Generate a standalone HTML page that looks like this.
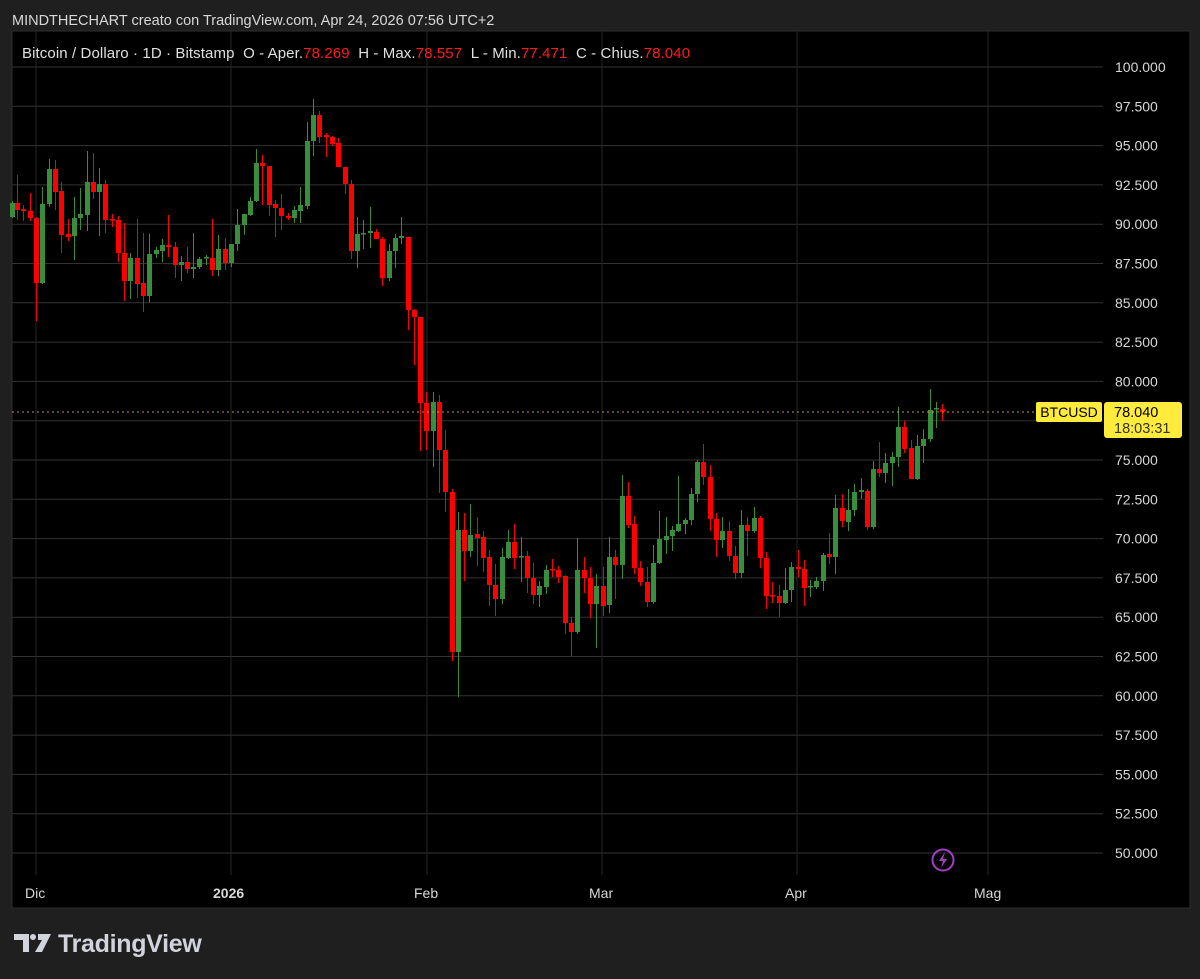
<!DOCTYPE html>
<html><head><meta charset="utf-8"><style>
body{margin:0;background:#1f1f1f;width:1200px;height:979px;overflow:hidden;font-family:"Liberation Sans",sans-serif;}
#hdr{position:absolute;left:12px;top:13px;color:#d8d8d8;font-size:14.5px;}
#leg{position:absolute;left:22px;top:45px;color:#e0e0e0;font-size:15px;white-space:pre;letter-spacing:0.1px}
#leg span{color:#ff1a1a}
svg{position:absolute;left:0;top:0;}
</style></head><body>
<svg id="s" width="1200" height="979" xmlns="http://www.w3.org/2000/svg" font-family="Liberation Sans, sans-serif">
<rect x="12" y="31" width="1178" height="877" fill="#000" stroke="#2e2e2e"/>
<g id="grid"></g>
<g id="candles"></g>
<line x1="12" y1="412" x2="1035" y2="412" stroke="#c0a030" stroke-width="1" stroke-dasharray="2,3"/>
<rect x="1036" y="402" width="66" height="20" rx="2" fill="#ffeb3b"/>
<text x="1069" y="417" font-size="14" fill="#000" text-anchor="middle">BTCUSD</text>
<rect x="1104" y="402" width="78" height="36" rx="3" fill="#ffeb3b"/>
<text x="1114" y="417" font-size="14.5" fill="#000">78.040</text>
<text x="1114" y="433" font-size="14.5" fill="#333">18:03:31</text>
<circle cx="943" cy="860" r="10.5" fill="none" stroke="#a43fc4" stroke-width="2"/>
<path d="M945 852 L939 861 L943 861 L941 868 L947 859 L943 859 Z" fill="#a43fc4"/>
<g font-size="14" fill="#d8d8d8">
<text x="25" y="898">Dic</text>
<text x="213" y="898" font-weight="bold">2026</text>
<text x="414" y="898">Feb</text>
<text x="589" y="898">Mar</text>
<text x="785" y="898">Apr</text>
<text x="974" y="898">Mag</text>
</g>
<g fill="#d1d4dc">
<path d="M14 934 h15 v18 h-6 v-12 h-9 z"/>
<circle cx="33" cy="937" r="3"/>
<path d="M38 934 h13 l-9 18 h-7 l7 -12 h-4 z"/>
<text x="58" y="952" font-size="25" font-weight="bold" letter-spacing="-0.3">TradingView</text>
</g>
</svg>
<div id="hdr">MINDTHECHART creato con TradingView.com, Apr 24, 2026 07:56 UTC+2</div>
<div id="leg">Bitcoin / Dollaro · 1D · Bitstamp  O - Aper.<span>78.269</span>  H - Max.<span>78.557</span>  L - Min.<span>77.471</span>  C - Chius.<span>78.040</span></div>
<script>
var ns="http://www.w3.org/2000/svg";
function el(p,t,a){var e=document.createElementNS(ns,t);for(var k in a)e.setAttribute(k,a[k]);p.appendChild(e);return e;}
var g=document.getElementById('grid');
var vals=["100.000","97.500","95.000","92.500","90.000","87.500","85.000","82.500","80.000","77.500","75.000","72.500","70.000","67.500","65.000","62.500","60.000","57.500","55.000","52.500","50.000"];
for(var i=0;i<21;i++){var y=67+i*39.3;
el(g,'line',{x1:12,x2:1103,y1:y,y2:y,stroke:'#333'});
if(i!=9){var t=el(g,'text',{x:1115,y:y+5,'font-size':14,fill:'#d8d8d8'});t.textContent=vals[i];}}
[36,231,427,602,797,988].forEach(function(x){el(g,'line',{x1:x,x2:x,y1:31,y2:875,stroke:'#262626'});});
var C=[
[12,203,217,201,218,'g'],[17,203,210,175,220,'r'],[23,209,211,205,221,'r'],[30,211,218,193,221,'r'],[36,218,283,217,321,'r'],[42,204,283,187,284,'g'],[49,169,204,159,207,'g'],[55,169,192,160,210,'r'],[61,191,235,182,253,'r'],[68,234,237,219,241,'r'],[74,218,236,197,260,'g'],[80,214,218,188,230,'g'],[87,182,215,151,231,'g'],[93,182,192,153,199,'r'],[99,184,192,168,236,'g'],[105,184,220,180,233,'r'],[112,219,220,214,227,'r'],[118,220,253,216,262,'r'],[124,253,281,223,301,'r'],[130,258,281,253,299,'g'],[137,258,284,219,298,'r'],[143,283,296,233,312,'r'],[149,254,296,234,302,'g'],[156,250,254,247,258,'g'],[162,245,251,239,262,'g'],[168,245,247,215,257,'r'],[175,247,265,242,278,'r'],[181,262,265,256,281,'g'],[187,262,269,247,273,'r'],[193,267,269,233,278,'g'],[199,259,267,257,269,'g'],[206,257,258,255,265,'g'],[212,258,270,219,276,'r'],[218,249,270,235,276,'g'],[225,249,263,238,270,'r'],
[231,244,263,244,267,'g'],[237,225,244,209,251,'g'],[244,214,225,214,235,'g'],[250,201,215,197,216,'g'],[256,163,201,149,202,'g'],[262,163,166,155,205,'r'],[269,166,205,166,216,'r'],[275,204,208,200,237,'r'],[281,208,216,194,230,'r'],[288,216,218,213,220,'r'],[294,210,218,206,223,'g'],[300,205,211,187,223,'g'],[307,141,206,122,209,'g'],[313,115,141,99,156,'g'],[319,115,137,111,143,'r'],[326,135,137,133,157,'r'],[332,137,144,136,146,'r'],[338,143,167,138,167,'r'],[345,167,184,167,194,'r'],[351,184,251,180,259,'r'],[357,234,251,217,268,'g'],[363,233,234,220,249,'g'],[370,231,233,207,248,'g'],[376,232,239,229,239,'r'],[382,239,278,237,286,'r'],[389,251,278,244,281,'g'],[395,238,251,234,268,'g'],[401,236,238,217,244,'g'],[408,237,310,237,330,'r'],[414,310,317,309,365,'r'],[420,317,403,317,451,'r'],[426,403,431,392,450,'r'],[433,402,431,392,467,'g'],[439,402,450,395,493,'r'],[445,450,492,430,512,'r'],[452,492,652,489,661,'r'],[458,530,652,512,697,'g'],[464,530,551,513,581,'r'],
[470,535,551,504,557,'g'],[477,534,538,517,566,'r'],[483,537,558,531,572,'r'],[489,557,585,550,606,'r'],[495,585,599,564,616,'r'],[502,557,599,548,604,'g'],[508,542,558,530,559,'g'],[514,542,558,524,569,'r'],[521,556,557,537,582,'g'],[527,556,578,551,593,'r'],[533,578,595,563,604,'r'],[539,586,595,581,607,'g'],[546,570,587,565,594,'g'],[552,569,570,559,577,'r'],[558,570,577,566,583,'r'],[565,576,623,575,634,'r'],[571,623,632,617,656,'r'],[577,570,632,538,634,'g'],[584,570,578,557,593,'r'],[590,578,604,567,618,'r'],[596,586,604,574,648,'g'],[603,586,606,567,616,'r'],[609,557,605,537,613,'g'],[615,557,565,550,599,'r'],[622,496,565,475,579,'g'],[628,496,525,482,528,'r'],[634,524,568,516,574,'r'],[640,568,582,561,586,'r'],[647,582,602,567,607,'r'],[653,563,602,545,604,'g'],[659,539,563,511,564,'g'],[666,536,540,517,554,'g'],[672,530,536,526,551,'g'],[678,524,531,476,532,'g'],[685,520,524,518,534,'g'],[691,494,520,488,525,'g'],[697,462,494,460,502,'g'],[703,462,477,444,485,'r'],
[710,477,519,465,531,'r'],[716,519,540,513,557,'r'],[722,531,540,517,548,'g'],[729,531,556,521,561,'r'],[735,556,573,546,579,'r'],[741,525,573,510,578,'g'],[747,525,531,517,556,'r'],[754,518,531,507,533,'g'],[760,518,558,516,568,'r'],[766,558,596,552,609,'r'],[772,595,596,582,603,'r'],[779,596,603,585,617,'r'],[785,590,603,568,604,'g'],[791,567,590,562,602,'g'],[798,567,569,550,577,'r'],[804,569,588,560,606,'r'],[810,586,587,580,597,'g'],[816,581,587,577,589,'g'],[823,555,581,553,591,'g'],[829,554,557,533,564,'r'],[835,508,557,495,574,'g'],[842,508,521,494,527,'r'],[848,510,522,489,531,'g'],[854,492,510,484,516,'g'],[861,490,492,478,499,'g'],[867,491,527,489,530,'r'],[873,469,527,461,529,'g'],[879,469,473,442,477,'r'],[885,463,473,453,483,'g'],[892,457,463,452,486,'g'],[898,427,457,407,467,'g'],[904,427,449,421,453,'r'],[911,448,479,440,479,'r'],[917,446,479,435,480,'g'],[923,439,446,429,463,'g'],[930,410,439,389,442,'g'],[936,408,409,402,428,'g'],[942,409,412,404,421,'r']];
var cg=document.getElementById('candles');
C.forEach(function(c){var col=c[5]=='g'?'#388e3c':'#ff0000';
el(cg,'rect',{x:c[0],y:c[3],width:1,height:Math.max(1,c[4]-c[3]),fill:col});
el(cg,'rect',{x:c[0]-2,y:c[1],width:5,height:Math.max(1.5,c[2]-c[1]),fill:col});});
</script>
</body></html>
